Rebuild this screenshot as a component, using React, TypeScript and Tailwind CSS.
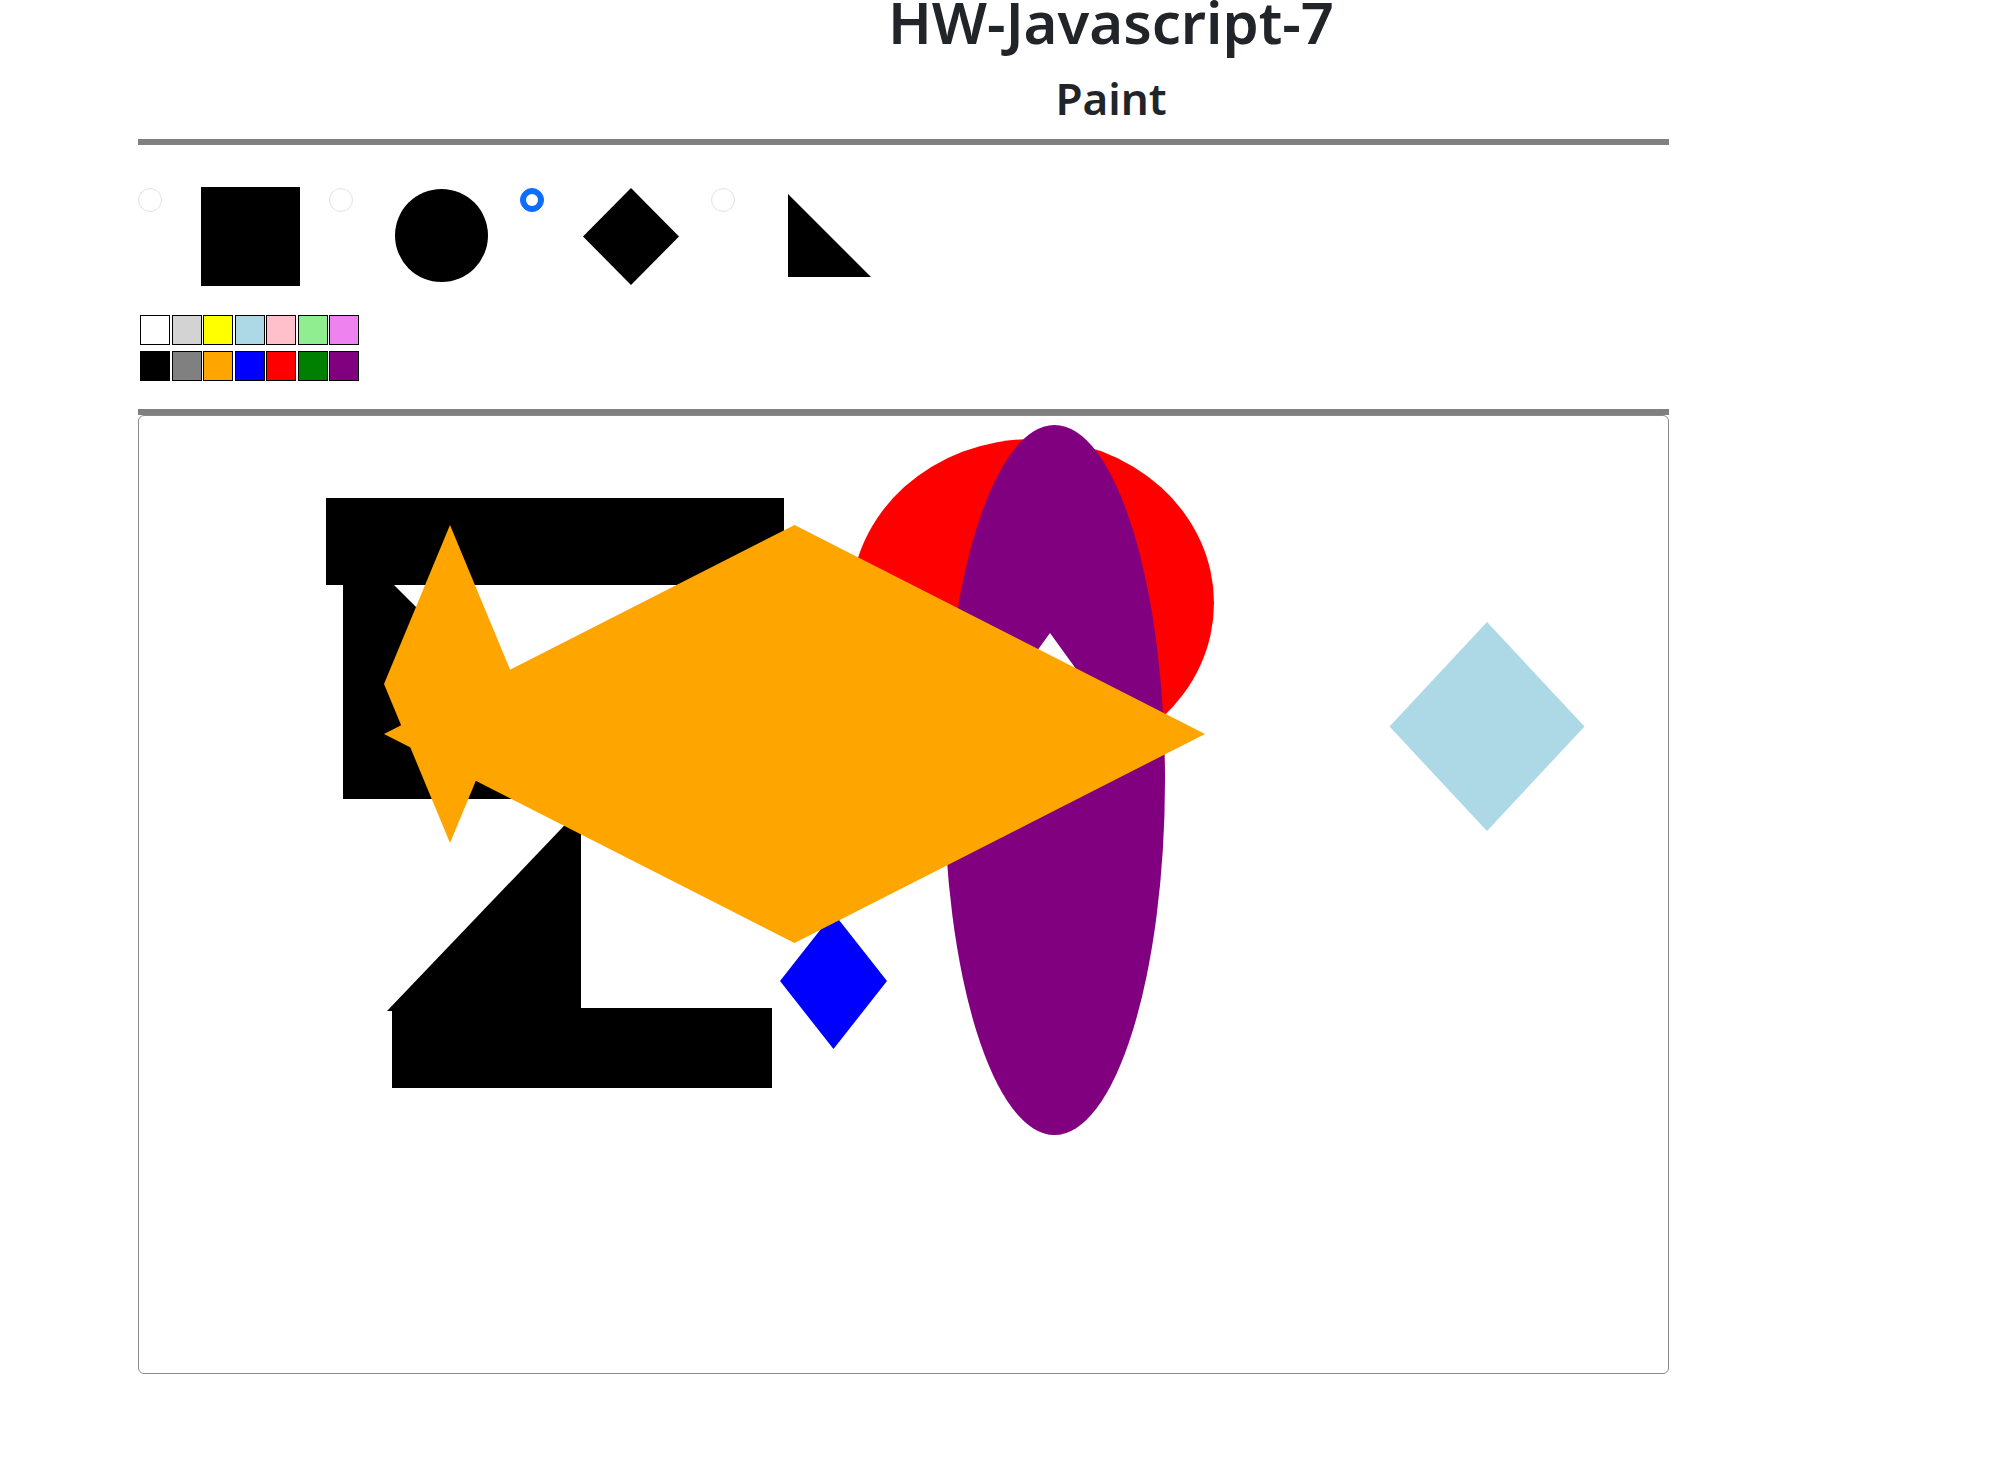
import React from "react";

const row1 = ["#ffffff", "#d3d3d3", "#ffff00", "#add8e6", "#ffc0cb", "#90ee90", "#ee82ee"];
const row2 = ["#000000", "#808080", "#ffa500", "#0000ff", "#ff0000", "#008000", "#800080"];

function Radio({ checked }: { checked?: boolean }) {
  return (
    <div
      className={
        "mt-[1px] w-6 h-6 rounded-full shrink-0 flex items-center justify-center border " +
        (checked ? "bg-[#0d6efd] border-[#0d6efd]" : "bg-white border-[#dee2e6]")
      }
    >
      {checked ? <div className="w-3 h-3 rounded-full bg-white" /> : null}
    </div>
  );
}

function ToolItem({ checked, children }: { checked?: boolean; children: React.ReactNode }) {
  return (
    <div className="flex items-start w-[191px] shrink-0">
      <Radio checked={checked} />
      <svg width="100" height="100" viewBox="0 0 100 100" className="ml-[39px] shrink-0">
        {children}
      </svg>
    </div>
  );
}

export default function App() {
  return (
    <div className="w-[1989px] min-h-[1468px] bg-white text-[#212529] font-['Noto_Sans',sans-serif]">
      <div className="pl-[233px] text-center">
        <h1 className="-mt-[7px] text-[58px] leading-none font-semibold">HW-Javascript-7</h1>
        <h2 className="mt-[25px] text-[44px] leading-none font-semibold">Paint</h2>
      </div>
      <div className="ml-[138px] w-[1531px]">
        <div className="mt-[19px] h-[6px] bg-[#808080]" />
        <div className="mt-[42px] flex">
          <ToolItem>
            <rect x="0" y="0" width="99" height="99" fill="#000" />
          </ToolItem>
          <ToolItem>
            <circle cx="49.5" cy="48.5" r="46.5" fill="#000" />
          </ToolItem>
          <ToolItem checked>
            <polygon points="48,1 96,49.5 48,98 0,49.5" fill="#000" />
          </ToolItem>
          <ToolItem>
            <polygon points="14,7 14,90 97,90" fill="#000" />
          </ToolItem>
        </div>
        <div className="mt-[28px] pl-[2px] flex flex-col gap-[6px]">
          {[row1, row2].map((row, ri) => (
            <div key={ri} className="flex gap-[1.5px]">
              {row.map((c) => (
                <div key={c} className="w-[30px] h-[30px] border border-black" style={{ backgroundColor: c }} />
              ))}
            </div>
          ))}
        </div>
        <div className="mt-[28px] h-[6px] bg-[#808080]" />
        <div className="h-[959px] border border-[#8a8a8a] rounded-md overflow-hidden bg-white">
          <svg className="w-full h-full block" viewBox="139 416 1529 957" preserveAspectRatio="none">
            <ellipse cx="1032.5" cy="603" rx="181.5" ry="164" fill="#ff0000" />
            <ellipse cx="1054.5" cy="780" rx="110.5" ry="355" fill="#800080" />
            <polygon points="1050,633 1110,716 1050,799 990,716" fill="#ffffff" />
            <rect x="326" y="498" width="458" height="87" fill="#000" />
            <polygon points="343,534 343,799 608,799" fill="#000" />
            <polygon points="581,808 581,1011 387,1011" fill="#000" />
            <rect x="392" y="1008" width="380" height="80" fill="#000" />
            <polygon points="833.5,913 887,981 833.5,1049 780,981" fill="#0000ff" />
            <polygon points="1487,622 1584.5,726.5 1487,831 1389.5,726.5" fill="#add8e6" />
            <polygon points="450,525 516,684 450,843 384,684" fill="#ffa500" />
            <polygon points="794.5,525 1205,734 794.5,943 384,734" fill="#ffa500" />
          </svg>
        </div>
      </div>
    </div>
  );
}
